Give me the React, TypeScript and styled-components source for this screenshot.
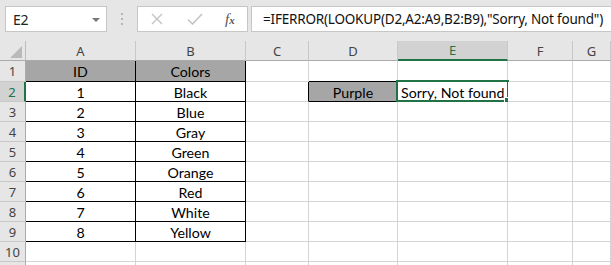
import React from "react";
import styled, { createGlobalStyle, css } from "styled-components";

const GREEN = "#217346";

const GlobalStyle = createGlobalStyle`
  html, body {
    margin: 0;
    padding: 0;
    background: #ffffff;
  }
  * {
    box-sizing: border-box;
  }
`;

const COLUMNS = ["A", "B", "C", "D", "E", "F", "G"];
const COL_WIDTHS = "26px 110px 110px 63px 89px 110px 65px 1fr";
const ROW_COUNT = 11;

type CellDef = {
  text?: string;
  fill?: boolean;
  darkRight?: boolean;
  darkBottom?: boolean;
  align?: "left" | "center";
  selected?: boolean;
};

const colors = ["Black", "Blue", "Gray", "Green", "Orange", "Red", "White", "Yellow"];

function buildCell(row: number, col: number): CellDef {
  // table A1:B9
  if (col <= 1 && row >= 1 && row <= 9) {
    const header = row === 1;
    let text = "";
    if (header) text = col === 0 ? "ID" : "Colors";
    else text = col === 0 ? String(row - 1) : colors[row - 2];
    return { text, fill: header, darkRight: true, darkBottom: true, align: "center" };
  }
  // lookup value D2 and its neighbours
  if (row === 2 && col === 2) return { darkRight: true };
  if (row === 1 && col === 3) return { darkBottom: true };
  if (row === 2 && col === 3)
    return { text: "Purple", fill: true, darkRight: true, darkBottom: true, align: "center" };
  if (row === 2 && col === 4) return { text: "Sorry, Not found", align: "left", selected: true };
  return {};
}

function App() {
  const rows = Array.from({ length: ROW_COUNT }, (_, i) => i + 1);

  return (
    <Frame>
      <GlobalStyle />
      <FormulaBar>
        <NameBox>
          <span>E2</span>
          <DropArrow />
        </NameBox>
        <Grip>
          <i />
          <i />
          <i />
        </Grip>
        <ButtonBox>
          <svg width="12" height="12" viewBox="0 0 12 12">
            <path d="M1 1 L11 11 M11 1 L1 11" stroke="#c3c3c3" strokeWidth="1.4" fill="none" />
          </svg>
          <svg width="16" height="12" viewBox="0 0 16 12">
            <path d="M1 6.5 L5.5 11 L15 1" stroke="#c3c3c3" strokeWidth="1.6" fill="none" />
          </svg>
          <Fx>
            f<sub>x</sub>
          </Fx>
        </ButtonBox>
        <FormulaInput>=IFERROR(LOOKUP(D2,A2:A9,B2:B9),"Sorry, Not found")</FormulaInput>
      </FormulaBar>

      <Sheet>
        <Corner>
          <CornerTriangle />
        </Corner>
        {COLUMNS.map((c) => (
          <ColHeader key={c} $active={c === "E"}>
            {c}
          </ColHeader>
        ))}
        {rows.map((r) => (
          <React.Fragment key={r}>
            <RowHeader $active={r === 2}>{r}</RowHeader>
            {COLUMNS.map((c, ci) => {
              const cell = buildCell(r, ci);
              return (
                <Cell
                  key={c}
                  $fill={cell.fill}
                  $darkRight={cell.darkRight}
                  $darkBottom={cell.darkBottom}
                  $align={cell.align || "left"}
                >
                  {cell.text}
                  {cell.selected && (
                    <Selection>
                      <FillHandle />
                    </Selection>
                  )}
                </Cell>
              );
            })}
          </React.Fragment>
        ))}
      </Sheet>
    </Frame>
  );
}

export default App;

// styles

const Frame = styled.div`
  width: 611px;
  height: 265px;
  overflow: hidden;
  background: #e6e6e6;
`;

const FormulaBar = styled.div`
  height: 41px;
  display: flex;
  align-items: flex-start;
  padding: 6px 0 0 5px;
  font-family: "Noto Sans", "Open Sans", sans-serif;
`;

const NameBox = styled.div`
  width: 102px;
  height: 26px;
  background: #ffffff;
  border: 1px solid #c6c6c6;
  display: flex;
  align-items: center;
  justify-content: space-between;
  padding: 0 6px 0 7px;
  font-size: 14px;
  color: #222;
  letter-spacing: -0.2px;
`;

const DropArrow = styled.span`
  width: 0;
  height: 0;
  border-left: 4px solid transparent;
  border-right: 4px solid transparent;
  border-top: 4px solid #777;
  margin-top: 1px;
`;

const Grip = styled.div`
  width: 30px;
  height: 26px;
  display: flex;
  flex-direction: column;
  align-items: center;
  justify-content: center;
  gap: 3px;
  & i {
    display: block;
    width: 2px;
    height: 2px;
    background: #b5b5b5;
  }
`;

const ButtonBox = styled.div`
  width: 111px;
  height: 26px;
  background: #ffffff;
  border: 1px solid #c6c6c6;
  display: flex;
  align-items: center;
  padding: 0 12px 0 13px;
  & svg:first-child {
    margin-right: 24px;
  }
  & svg:nth-child(2) {
    margin-right: 22px;
  }
`;

const Fx = styled.span`
  font-family: "Liberation Serif", "DejaVu Serif", serif;
  font-style: italic;
  font-size: 15px;
  color: #555;
  line-height: 1;
  & sub {
    font-size: 11px;
    vertical-align: 0;
    font-weight: bold;
  }
`;

const FormulaInput = styled.div`
  flex: 1;
  margin-left: 3px;
  height: 26px;
  background: #ffffff;
  border: 1px solid #c6c6c6;
  border-right: none;
  padding: 0 0 0 11px;
  font-size: 13.5px;
  letter-spacing: -0.2px;
  line-height: 24px;
  color: #111;
  white-space: nowrap;
  overflow: hidden;
`;

const Sheet = styled.div`
  display: grid;
  grid-template-columns: ${COL_WIDTHS};
  grid-template-rows: 20px 21px repeat(${ROW_COUNT - 1}, 20px);
  background: #ffffff;
`;

const headerBase = css`
  background: #e6e6e6;
  font-family: "Noto Sans", "Open Sans", sans-serif;
  font-size: 13px;
  color: #444;
  display: flex;
  align-items: center;
  justify-content: center;
`;

const Corner = styled.div`
  ${headerBase};
  position: relative;
  border-right: 1px solid #bdbdbd;
  border-bottom: 1px solid #ababab;
`;

const CornerTriangle = styled.span`
  position: absolute;
  right: 3px;
  bottom: 2px;
  width: 0;
  height: 0;
  border-left: 12px solid transparent;
  border-bottom: 12px solid #b9b9b9;
`;

const ColHeader = styled.div<{ $active?: boolean }>`
  ${headerBase};
  border-right: 1px solid #c8c8c8;
  border-bottom: 1px solid #ababab;
  ${(p) =>
    p.$active &&
    css`
      background: #d2d2d2;
      color: ${GREEN};
      border-bottom: 2px solid ${GREEN};
    `}
`;

const RowHeader = styled.div<{ $active?: boolean }>`
  ${headerBase};
  border-right: 1px solid #ababab;
  border-bottom: 1px solid #c8c8c8;
  ${(p) =>
    p.$active &&
    css`
      background: #d2d2d2;
      color: ${GREEN};
      border-right: 2px solid ${GREEN};
    `}
`;

const Cell = styled.div<{
  $fill?: boolean;
  $darkRight?: boolean;
  $darkBottom?: boolean;
  $align: "left" | "center";
}>`
  position: relative;
  display: flex;
  align-items: center;
  justify-content: ${(p) => (p.$align === "center" ? "center" : "flex-start")};
  padding: 1px 3px 0 3px;
  font-family: "Lato", "Open Sans", sans-serif;
  font-size: 14.2px;
  color: #000;
  white-space: nowrap;
  background: ${(p) => (p.$fill ? "#a6a6a6" : "#ffffff")};
  border-right: 1px solid ${(p) => (p.$darkRight ? "#000" : "#d4d4d4")};
  border-bottom: 1px solid ${(p) => (p.$darkBottom ? "#000" : "#d4d4d4")};
`;

const Selection = styled.div`
  position: absolute;
  left: -2px;
  top: -2px;
  right: -2px;
  bottom: -1px;
  border: 2px solid ${GREEN};
  pointer-events: none;
`;

const FillHandle = styled.span`
  position: absolute;
  right: -4px;
  bottom: -4px;
  width: 6px;
  height: 6px;
  background: ${GREEN};
  outline: 1px solid #ffffff;
`;
